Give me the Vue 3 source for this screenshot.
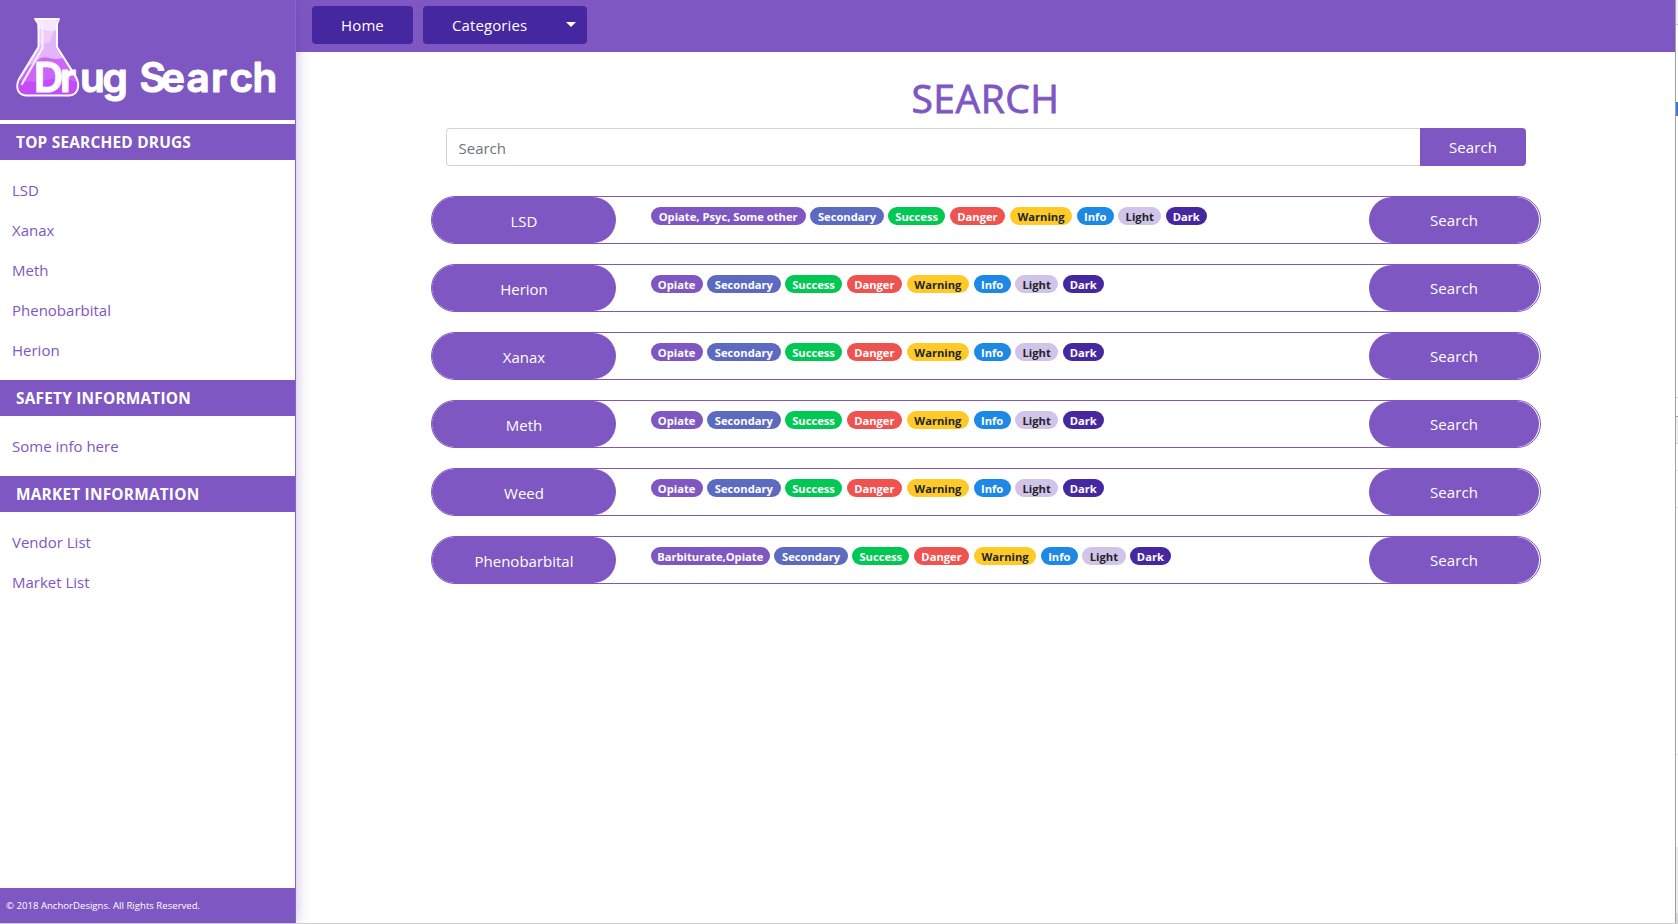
<script setup>
const groups = [
  { title: 'TOP SEARCHED DRUGS', links: ['LSD', 'Xanax', 'Meth', 'Phenobarbital', 'Herion'] },
  { title: 'SAFETY INFORMATION', links: ['Some info here'] },
  { title: 'MARKET INFORMATION', links: ['Vendor List', 'Market List'] },
]

const rows = [
  { name: 'LSD', tag: 'Opiate, Psyc, Some other', size: 'long' },
  { name: 'Herion', tag: 'Opiate', size: 'short' },
  { name: 'Xanax', tag: 'Opiate', size: 'short' },
  { name: 'Meth', tag: 'Opiate', size: 'short' },
  { name: 'Weed', tag: 'Opiate', size: 'short' },
  { name: 'Phenobarbital', tag: 'Barbiturate,Opiate', size: 'medium' },
]

const badges = ['Secondary', 'Success', 'Danger', 'Warning', 'Info', 'Light', 'Dark']
</script>

<template>
  <div class="page">
    <aside class="sidebar">
      <div class="brand">
        <svg class="logo" width="295" height="120" viewBox="0 0 295 120">
          <path d="M38 20H57V47L77 80Q81 94 70 95H25Q14 94 18 82L38 48Z" fill="#e3b5fa" />
          <path d="M37 20H57L56 30Q51 33 47 31Q43 29 38 30Z" fill="#f5e6fd" />
          <path d="M38 31Q44 29 48 32L54 31L50 42Q46 44 43 43L38 47Z" fill="#eccdfc" />
          <path d="M39 59Q43 56 49 58Q56 60 63 58L77 81Q81 94 70 95H25Q14 94 18 83L29 66Z" fill="#cc66f8" />
          <path d="M19 80Q34 84 45 80Q62 76 77 82Q81 94 70 95H25Q14 94 19 80Z" fill="#c44bfa" />
          <path d="M35 19H59L57 24V47L76 77C81 87 77 95 69 95.500H26C18 95 15 88 19 79L38.500 47V24Z" fill="none" stroke="#fff" stroke-width="1.900" stroke-linejoin="round" />
          <path d="M42.500 23V48L22 84" fill="none" stroke="#f9edff" stroke-width="2.200" stroke-linecap="round" />
          <text class="wordmark" y="91.500" x="34 60 80 102.500 120 139.500 161 186.500 211 229.500 252.500">Drug Search</text>
        </svg>
      </div>
      <section v-for="g in groups" :key="g.title">
        <h2 class="group-title">{{ g.title }}</h2>
        <nav class="links"><a v-for="l in g.links" :key="l">{{ l }}</a></nav>
      </section>
      <footer class="footer">© 2018 AnchorDesigns. All Rights Reserved.</footer>
    </aside>

    <div class="content">
      <header class="topbar">
        <button class="nav-btn home">Home</button>
        <button class="nav-btn categories">Categories<span class="caret"></span></button>
      </header>
      <main class="main">
        <h1>SEARCH</h1>
        <div class="search">
          <div class="field">Search</div>
          <button class="go">Search</button>
        </div>
        <div v-for="r in rows" :key="r.name" class="row">
          <div class="pill name">{{ r.name }}</div>
          <div class="badges">
            <span class="badge primary" :class="r.size">{{ r.tag }}</span>
            <span v-for="b in badges" :key="b" class="badge" :class="b.toLowerCase()">{{ b }}</span>
          </div>
          <button class="pill action">Search</button>
        </div>
      </main>
    </div>

    <div class="edge">
      <i class="e1"></i><i class="e2"></i><i class="e3"></i><i class="e4"></i><i class="e5"></i>
      <i class="e6"></i><i class="e7"></i><i class="e8"></i><i class="e9"></i><i class="e10"></i>
    </div>
  </div>
</template>

<style>
body {
  overflow: hidden;
}
</style>

<style scoped>
* {
  box-sizing: border-box;
}
.page {
  display: flex;
  width: 1678px;
  height: 924px;
  border-bottom: 1px solid #cfcfcf;
  background: #fff;
  font: 15px/24px "Open Sans", "Noto Sans", sans-serif;
  color: #7e57c2;
}
button {
  border: 0;
  padding: 0;
  font: inherit;
  letter-spacing: 0.1px;
  color: #fff;
}
.sidebar {
  position: relative;
  z-index: 1;
  display: flex;
  flex-direction: column;
  flex: none;
  width: 296px;
  border-right: 1px solid #8763cf;
  background: #fff;
  box-shadow: 0 0 14px -1px rgba(80, 50, 170, 0.4);
  clip-path: inset(0 -20px 0 0);
}
.brand {
  height: 120px;
  margin-bottom: 4px;
  background: #7e57c2;
}
.logo {
  display: block;
}
.wordmark {
  font-family: Inter, sans-serif;
  font-size: 40.5px;
  font-weight: 600;
  fill: #fff;
  stroke: #fff;
  stroke-width: 1.2px;
  stroke-linejoin: round;
}
.group-title {
  height: 36px;
  margin: 0;
  padding-left: 16px;
  background: #7e57c2;
  color: #fff;
  font-size: 15.4px;
  font-weight: 700;
  letter-spacing: 0.22px;
  line-height: 38px;
}
.links {
  display: flex;
  flex-direction: column;
  padding: 10px 12px;
}
.links a {
  height: 40px;
  line-height: 40px;
}
.footer {
  height: 35px;
  margin-top: auto;
  padding-left: 6px;
  background: #7e57c2;
  color: #fff;
  font-size: 9.6px;
  line-height: 35px;
}
.content {
  flex: 1;
}
.topbar {
  display: flex;
  gap: 10px;
  height: 52px;
  padding: 6px 16px;
  background: #7e57c2;
}
.nav-btn {
  height: 38px;
  border-radius: 4px;
  background: #4527a0;
}
.home {
  width: 101px;
}
.categories {
  display: flex;
  align-items: center;
  justify-content: space-between;
  width: 164px;
  padding: 0 11px 0 29px;
}
.caret {
  margin-bottom: 1px;
  border: 5px solid transparent;
  border-top-color: #fff;
  border-bottom: 0;
}
.main {
  width: 1110px;
  margin: 0 auto;
  padding-top: 22px;
}
h1 {
  margin: 0;
  height: 54px;
  text-align: center;
  font-size: 39px;
  font-weight: 500;
  letter-spacing: 0.5px;
  line-height: 48px;
  -webkit-text-stroke: 0.8px #7e57c2;
}
.search {
  display: flex;
  height: 38px;
  margin: 0 15px 30px;
}
.field {
  flex: 1;
  padding-left: 12px;
  border: 1px solid #ced4da;
  border-right: 0;
  border-radius: 4px 0 0 4px;
  color: #6c757d;
  line-height: 38px;
}
.go {
  width: 106px;
  padding-left: 1px;
  border-radius: 0 4px 4px 0;
  background: #7e57c2;
}
.row {
  display: flex;
  height: 48px;
  margin-bottom: 20px;
  border: 1px solid #7e57c2;
  border-radius: 24px;
}
.pill {
  flex: none;
  height: 46px;
  border-radius: 23px;
  background: #7e57c2;
  color: #fff;
  text-align: center;
}
.name {
  width: 184px;
  padding-left: 1px;
  line-height: 48px;
}
.badges {
  display: flex;
  flex: 1;
  gap: 4.400px;
  padding: 10px 0 0 35px;
}
.badge {
  flex: none;
  height: 18px;
  border-radius: 9px;
  color: #fff;
  text-align: center;
  white-space: nowrap;
  font-size: 11.2px;
  font-weight: 700;
  line-height: 19px;
}
.primary { background: #7e57c2; }
.long { width: 155.400px; }
.medium { width: 119.500px; }
.short { width: 52.300px; }
.secondary { width: 73.400px; background: #5c6bc0; }
.success { width: 57.200px; background: #00c853; }
.danger { width: 55.600px; background: #ef5350; }
.warning { width: 62.700px; background: #ffca28; color: #212529; }
.info { width: 37px; background: #1e88e5; }
.light { width: 43.300px; background: #d1c4e9; color: #212529; }
.dark { width: 41px; background: #4527a0; }
.action {
  width: 170px;
  margin-right: 1px;
  padding-left: 1px;
}
.edge {
  display: flex;
  flex-direction: column;
  flex: none;
  width: 3px;
  border-left: 1px solid #a0a0a0;
}
.edge i { flex: none; }
.e1 { height: 25px; background: #efefef; border-bottom: 1px solid #c8c8c8; }
.e2 { height: 77px; }
.e3 { height: 14px; background: #3b78d8; }
.e4 { height: 282px; border-bottom: 1px solid #d0d0d0; }
.e5 { height: 19px; border-bottom: 1px solid #a0a0a0; }
.e6 { height: 27px; background: #f0f0f0; border-bottom: 1px solid #d0d0d0; }
.e7 { height: 27px; border-bottom: 1px solid #e4e4e4; }
.e8 { height: 37px; border-bottom: 1px solid #e4e4e4; }
.e9 { height: 247px; margin-bottom: 92px; border-bottom: 1px solid #e8e8e8; }
.e10 { height: 76px; background: #ebebeb; border-bottom: 10px solid #d8d8d8; }
</style>
